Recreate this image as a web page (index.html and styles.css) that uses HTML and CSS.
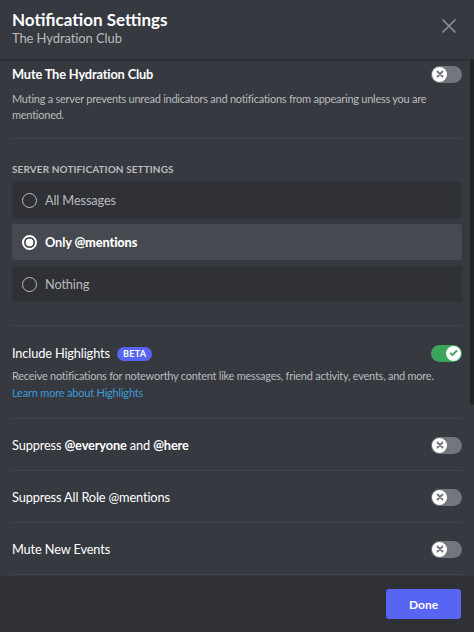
FILE: index.html
```html
<!DOCTYPE html>
<html>
<head>
<meta charset="utf-8">
<link rel="stylesheet" href="styles.css">
</head>
<body>
<div class="modal">
  <header class="header">
    <div class="titles">
      <div class="title">Notification Settings</div>
      <div class="subtitle">The Hydration Club</div>
    </div>
    <svg class="close" width="14" height="14" viewBox="0 0 14 14"><path d="M1 1L13 13M13 1L1 13" stroke="#8e9297" stroke-width="1.6" stroke-linecap="round"/></svg>
  </header>
  <main class="content">
    <section class="sec mute">
      <div class="row-head">
        <div class="row-title strong">Mute The Hydration Club</div>
        <span class="toggle off"><span class="knob"><svg width="8" height="8" viewBox="0 0 8 8"><path d="M1.5 1.5L6.5 6.5M6.5 1.5L1.5 6.5" stroke="#72767d" stroke-width="1.8" stroke-linecap="round"/></svg></span></span>
      </div>
      <p class="desc">Muting a server prevents unread indicators and notifications from appearing unless you are mentioned.</p>
    </section>
    <section class="sec radios">
      <div class="label">Server Notification Settings</div>
      <div class="radio-list">
        <div class="radio"><span class="dot"></span><span>All Messages</span></div>
        <div class="radio selected"><span class="dot"></span><span>Only <b>@mentions</b></span></div>
        <div class="radio"><span class="dot"></span><span>Nothing</span></div>
      </div>
    </section>
    <section class="sec highlights">
      <div class="row-head">
        <div class="row-title">Include Highlights <span class="beta">BETA</span></div>
        <span class="toggle on"><span class="knob"><svg width="9" height="8" viewBox="0 0 9 8"><path d="M1.5 4.3L3.5 6.2L7.5 1.8" fill="none" stroke="#3ba55c" stroke-width="1.8" stroke-linecap="round" stroke-linejoin="round"/></svg></span></span>
      </div>
      <p class="desc">Receive notifications for noteworthy content like messages, friend activity, events, and more.</p>
      <a class="link">Learn more about Highlights</a>
    </section>
    <section class="sec simple">
      <div class="row-title">Suppress <b>@everyone</b> and <b>@here</b></div>
      <span class="toggle off"><span class="knob"><svg width="8" height="8" viewBox="0 0 8 8"><path d="M1.5 1.5L6.5 6.5M6.5 1.5L1.5 6.5" stroke="#72767d" stroke-width="1.8" stroke-linecap="round"/></svg></span></span>
    </section>
    <section class="sec simple">
      <div class="row-title">Suppress All Role @mentions</div>
      <span class="toggle off"><span class="knob"><svg width="8" height="8" viewBox="0 0 8 8"><path d="M1.5 1.5L6.5 6.5M6.5 1.5L1.5 6.5" stroke="#72767d" stroke-width="1.8" stroke-linecap="round"/></svg></span></span>
    </section>
    <section class="sec simple">
      <div class="row-title">Mute New Events</div>
      <span class="toggle off"><span class="knob"><svg width="8" height="8" viewBox="0 0 8 8"><path d="M1.5 1.5L6.5 6.5M6.5 1.5L1.5 6.5" stroke="#72767d" stroke-width="1.8" stroke-linecap="round"/></svg></span></span>
    </section>
    <div class="scrollbar"></div>
  </main>
  <footer class="footer">
    <button class="done">Done</button>
  </footer>
</div>
</body>
</html>
```

FILE: styles.css
```css
* { box-sizing: border-box; }
html, body { margin: 0; padding: 0; }
body {
  width: 474px;
  height: 632px;
  background: #36393f;
  font-family: Lato, "Noto Sans", sans-serif;
  color: #dcddde;
  overflow: hidden;
}
.modal {
  display: flex;
  flex-direction: column;
  height: 632px;
}
.header {
  flex-shrink: 0;
  height: 60px;
  display: flex;
  justify-content: space-between;
  align-items: center;
  padding: 0 18px 2px 12px;
  background: #36393f;
  border-bottom: 1px solid #2a2c30;
  box-shadow: 0 1px 0 rgba(0,0,0,0.15);
  position: relative;
  z-index: 1;
}
.title {
  font-size: 17px;
  font-weight: 700;
  color: #ffffff;
  line-height: 20px;
}
.subtitle {
  font-size: 13px;
  color: #b9bbbe;
  line-height: 17px;
  letter-spacing: -0.1px;
}
.close { margin-top: -6px; }
.content {
  position: relative;
  flex: 1;
  min-height: 0;
  overflow: hidden;
  padding: 0 12px;
  display: flex;
  flex-direction: column;
}
.scrollbar {
  position: absolute;
  right: 0;
  top: 0;
  width: 4px;
  height: 345px;
  background: #202225;
  border-radius: 2px;
}
.sec { border-bottom: 1px solid #42454a; flex-shrink: 0; }
.mute { padding: 4px 0 15px; }
.row-head {
  display: flex;
  justify-content: space-between;
  align-items: center;
  height: 20px;
}
.row-title {
  font-size: 12.8px;
  color: #ffffff;
  line-height: 20px;
  letter-spacing: -0.15px;
}
.row-title.strong { font-weight: 700; }
.row-title b { font-weight: 700; }
.desc {
  margin: 7px 0 0;
  font-size: 11px;
  line-height: 16px;
  letter-spacing: -0.25px;
  color: #b9bbbe;
  padding-right: 20px;
}
.toggle {
  width: 31px;
  height: 17px;
  border-radius: 9px;
  display: flex;
  align-items: center;
  padding: 0 1px;
  flex-shrink: 0;
}
.toggle.off { background: #72767d; }
.toggle.on { background: #3ba55c; justify-content: flex-end; }
.knob {
  width: 15px;
  height: 15px;
  border-radius: 50%;
  background: #ffffff;
  display: flex;
  align-items: center;
  justify-content: center;
}
.radios { padding: 23px 0 23px; }
.label {
  font-size: 10px;
  font-weight: 700;
  text-transform: uppercase;
  color: #b9bbbe;
  line-height: 14px;
  letter-spacing: 0.1px;
  margin-bottom: 6px;
}
.radio-list { display: flex; flex-direction: column; gap: 6px; }
.radio {
  height: 36px;
  background: #2f3136;
  border-radius: 3px;
  display: flex;
  align-items: center;
  gap: 8px;
  padding-left: 10px;
  font-size: 12.8px;
  letter-spacing: -0.15px;
  color: #b9bbbe;
}
.radio .dot {
  width: 15px;
  height: 15px;
  border-radius: 50%;
  border: 1.6px solid #b9bbbe;
  flex-shrink: 0;
}
.radio.selected { background: #46494f; color: #ffffff; font-weight: 700; }
.radio.selected .dot {
  border: 2px solid #ffffff;
  background: radial-gradient(circle, #ffffff 0 3.6px, #46494f 4.2px);
}
.highlights { padding: 17px 0 17px; }
.highlights .desc { margin-top: 5px; padding-right: 0; }
.beta {
  display: inline-block;
  vertical-align: 1px;
  margin-left: 4px;
  background: #5865f2;
  color: #ffffff;
  font-size: 9px;
  font-weight: 700;
  line-height: 14px;
  padding: 0 6px;
  border-radius: 8px;
  letter-spacing: 0.3px;
}
.link {
  display: block;
  font-size: 11px;
  line-height: 17px;
  letter-spacing: -0.2px;
  color: #3b9bd9;
}
.simple {
  height: 52px;
  display: flex;
  justify-content: space-between;
  align-items: center;
  padding-top: 1px;
}
.footer {
  flex-shrink: 0;
  height: 56px;
  background: #2f3136;
  display: flex;
  justify-content: flex-end;
  align-items: flex-start;
  padding: 13px 13px 0 0;
}
.done {
  width: 75px;
  height: 30px;
  border: none;
  border-radius: 3px;
  background: #5865f2;
  color: #ffffff;
  font-family: Lato, "Noto Sans", sans-serif;
  font-size: 12px;
  font-weight: 700;
}
```
